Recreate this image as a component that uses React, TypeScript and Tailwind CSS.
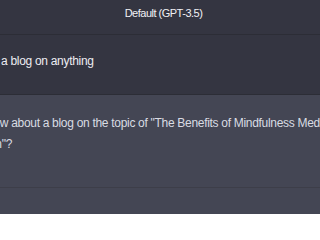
export default function App() {
  return (
    <div
      className="w-[320px] h-[214px] overflow-hidden bg-[#444654] text-[12px] tracking-[-0.3px]"
      style={{ fontFamily: "'Liberation Sans', Arial, sans-serif" }}
    >
      <div className="h-[35px] flex items-center justify-center bg-[#343541] border-b border-[#2c2d36] text-[11px] tracking-[-0.5px] text-[#f1f1f5] pl-[7px] pb-[8px]">
        Default (GPT-3.5)
      </div>
      <div className="h-[60px] flex items-center bg-[#343541] border-b border-[#2c2d36] text-[#ececf1] pl-px pb-[6px]">
        <p className="leading-[21px]">a blog on anything</p>
      </div>
      <div className="h-[93px] bg-[#444654] border-b border-[#3d3e49] pt-[18px] text-[#d9dce3]">
        <div className="-ml-[15px] leading-[21px] whitespace-nowrap">
          <p>How about a blog on the topic of "The Benefits of Mindfulness Meditation</p>
          <p className="pl-[4px]">on"?</p>
        </div>
      </div>
      <div className="h-[26px] bg-[#444654]" />
    </div>
  );
}
